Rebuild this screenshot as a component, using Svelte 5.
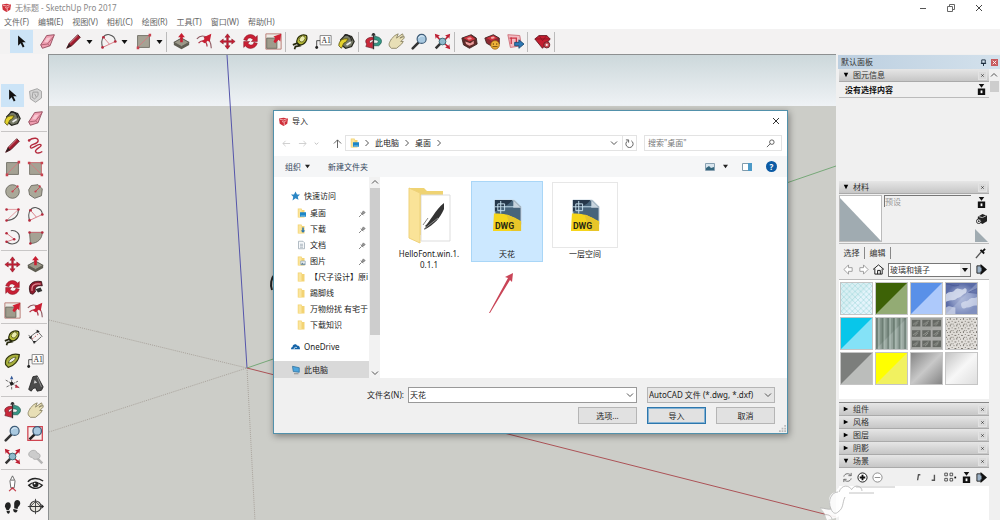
<!--
SketchUp main window with the import dialog open over the model canvas.

@component
-->
<script lang="ts">
	type Crumb = { label: string };

	const menus = ['文件(F)', '编辑(E)', '视图(V)', '相机(C)', '绘图(R)', '工具(T)', '窗口(W)', '帮助(H)'];

	/* Bodies of the tool icons, all drawn on a 20 x 20 grid */
	const icons: Record<string, string> = {
		select: '<path d="M6 3v12l3-3 2.5 5 2-1-2.5-5h4z" fill="#111"/>',
		component: '<path d="M3 5l9-3 5 3v8l-7 5-6-4z" fill="#d5d5d5" stroke="#999"/><path d="M7 6h6v4l-4 4-3-2zM9 8l2 4" fill="none" stroke="#999"/>',
		paint: '<path d="M3 8l6-6 7 2 3 6-3 6-7 2-5-4z" fill="#777b68" stroke="#26271f" stroke-width="1.4"/><path d="M1 15c0-6 4-9 11-8l-3 4c-3 0-3 4-5 7z" fill="#e4d22e" stroke="#55500f"/><path d="M7 3c4-2 9 1 9 6" fill="none" stroke="#222" stroke-width="1.5"/><path d="M10 14l5-3" stroke="#eee" stroke-width="2"/>',
		eraser: '<path d="M2 14l7-11 9-1-5 13-9 3z" fill="#ef9db0" stroke="#8c4456"/><path d="M2 14l8-1 8-10M10 13l3 2" fill="none" stroke="#a95a6c"/><path d="M9 6l5-1-4 6-4 0z" fill="#f8c7d1"/>',
		pencil: '<path d="M2 18l3-6L15 2l3 3L8 15z" fill="#a21d2f" stroke="#4d1119"/><path d="M6 12L15 3" stroke="#e28b94"/><path d="M2 18l3-5 2 2z" fill="#222"/>',
		freehand: '<path d="M2 4c6-4 12-3 11 1S3 8 4 12s9-5 12-3-7 5-6 8 5 2 8 0" fill="none" stroke="#b52a3d" stroke-width="1.6"/><circle cx="2.500" cy="4" r="1.500" fill="#b52a3d"/>',
		rectangle: '<path d="M3 3h14v14H3z" fill="#a5a294" stroke="#6c6a60"/><path d="M3 17L17 3" stroke="#d67a80"/><path d="M2 16h3v3H2zM16 1h3v3h-3z" fill="#c84350"/>',
		rotrect: '<path d="M3 3h14v14H3z" fill="#a5a294" stroke="#77746a"/><path d="M3 3h14v14M3 3l14 14" fill="none" stroke="#d67a80"/><path d="M1 2h3v3H1zM16 2h3v3h-3zM16 16h3v3h-3z" fill="#c84350"/>',
		circle: '<circle cx="10" cy="10" r="8" fill="#aaa899" stroke="#65635b"/><path d="M10 10l5-5" stroke="#c84350"/><circle cx="10" cy="10" r="1.3" fill="#c84350"/><circle cx="16" cy="4" r="1.3" fill="#c84350"/>',
		polygon: '<path d="M5 3l8-1 5 5-1 8-8 3-6-4-1-6z" fill="#aaa899" stroke="#65635b"/><path d="M10 10l5-5" stroke="#c84350"/><circle cx="10" cy="10" r="1.3" fill="#c84350"/><circle cx="15" cy="4" r="1.3" fill="#c84350"/>',
		arc: '<path d="M3 17C14 16 17 11 17 4" fill="none" stroke="#555" stroke-width="1.200"/><path d="M3 4h14M3 17l14-13" stroke="#df8d93"/><circle cx="3" cy="4" r="1.5" fill="#b52a3d"/><circle cx="17" cy="4" r="1.5" fill="#b52a3d"/><circle cx="3" cy="17" r="1.5" fill="#b52a3d"/>',
		arc2: '<path d="M3 17C0 7 5 1 11 2c4 1 7 4 7 8" fill="none" stroke="#555" stroke-width="1.2"/><path d="M3 17L18 10M4 5l7 8" stroke="#d56d77"/><circle cx="3" cy="17" r="1.6" fill="#b52a3d"/><circle cx="18" cy="10" r="1.6" fill="#b52a3d"/><circle cx="4" cy="5" r="1.6" fill="#b52a3d"/>',
		arc3: '<path d="M8 2c6-1 11 3 10 9-1 6-9 9-15 4" fill="none" stroke="#555" stroke-width="1.2"/><path d="M3 5l9 7M3 15l9-3" fill="none" stroke="#d56d77"/><circle cx="3" cy="5" r="1.5" fill="#b52a3d"/><circle cx="12" cy="12" r="1.5" fill="#b52a3d"/><circle cx="3" cy="15" r="1.5" fill="#b52a3d"/>',
		pie: '<path d="M3 4h15c0 7-5 13-14 13z" fill="#a5a294" stroke="#65635b"/><path d="M3 4h15" stroke="#d56d77"/><circle cx="3" cy="4" r="1.5" fill="#b52a3d"/><circle cx="18" cy="4" r="1.5" fill="#b52a3d"/><circle cx="4" cy="17" r="1.5" fill="#b52a3d"/>',
		pushpull: '<path d="M1 11l9-5 9 5-9 5z" fill="#9b9888" stroke="#4c4a42"/><path d="M1 11v3l9 5 9-5v-3l-9 5z" fill="#5f5d52"/><path d="M10 0l4 5h-2.500v6h-3V5H6z" fill="#c81f32"/>',
		followme: '<path d="M4 17C0 7 6 1 17 3l1 5C10 7 9 11 10 15l-3 3z" fill="#8d1b2c" stroke="#35141a"/><path d="M6 14c-1-7 3-9 10-8" fill="none" stroke="#e58a93" stroke-width="1.500"/><path d="M10 12l6-2 2 4-5 2z" fill="#333"/>',
		offset: '<path d="M1 7C6 1 17 2 18 18" fill="none" stroke="#8f5961" stroke-width="1.300"/><path d="M3 12c4-5 10-3 10 4" fill="none" stroke="#b0394a" stroke-width="1.500"/><path d="M7 10l3-3-1-2 9-4-2 10-2-2-4 3z" fill="#c81f32"/>',
		move: '<path d="M10 1l3 4h-2v4h4V7l4 3-4 3v-2h-4v4h2l-3 4-3-4h2v-4H5v2l-4-3 4-3v2h4V5H7z" fill="#c31d33" stroke="#8a1c2a" stroke-width=".6"/>',
		rotate: '<path d="M2 8c2-7 11-8 14-3l2-2v7h-7l2-2C10 4 6 6 6 9zM18 12c-2 7-11 8-14 3l-2 2v-7h7l-2 2c3 4 7 2 7-1z" fill="#c91f34" stroke="#871726" stroke-width=".6"/>',
		scale: '<path d="M1 1h18v18H1z" fill="#eceae4" stroke="#b5726b"/><path d="M2 6h12v12H2z" fill="#9f9c8c" stroke="#67655a"/><path d="M10 10l2-4-2-2 9-3-1 9-2-2-4 4z" fill="#cf2033"/>',
		tape: '<path d="M6 12C4 6 11 0 17 3c2 5-2 11-8 11z" fill="#b8bc35" stroke="#2d300d" stroke-width="1.500"/><ellipse cx="12" cy="7" rx="3" ry="4" transform="rotate(40 12 7)" fill="#e9ebab" stroke="#62651c"/><path d="M1 14l5-2 3 3-5 1-1 3" fill="none" stroke="#25270d" stroke-width="2"/>',
		dimension: '<path d="M4 9L12 3M8 17L17 9M2 7l7 10M11 1l7 8" stroke="#555" fill="none"/><path d="M2 10l4-2-1 4zM12 1l3 2-4 2zM7 14l4 0-3 3z" fill="#222"/><path d="M6 12l7-6" stroke="#a33" stroke-dasharray="2"/>',
		protractor: '<path d="M2 15C0 6 9 1 18 3c0 7-7 14-13 15z" fill="#a9b13d" stroke="#34380f" stroke-width="1.400"/><path d="M5 13c1-4 5-7 9-7-1 4-5 7-9 7z" fill="#eee" stroke="#555a1c"/>',
		axes: '<path d="M9 2v16M2 6l16 9M3 14l14-7" stroke="#555" stroke-dasharray="3 1"/><path d="M9 1l2 4H7z" fill="#345a9b"/><path d="M18 15l-4-4-1 4z" fill="#b52a3d"/><circle cx="9" cy="10" r="2" fill="#222"/>',
		text3d: '<path d="M2 17L7 2l5-1 7 13-2 4-5 1-2-4-3 1-2 3z" fill="#4b4b4b" stroke="#222"/><path d="M8 10l1-4 3 3z" fill="#ccc"/><path d="M12 2l5 12" stroke="#999"/>',
		orbit: '<path d="M10 1v18M8 3l2-3 2 3" stroke="#333" fill="none" stroke-width="1.500"/><path d="M9 5C2 5-1 9 2 13l-1 3 8 2V10L6 12C4 9 7 8 10 8z" fill="#c9283a" stroke="#5e1420" stroke-width=".7"/><path d="M11 4c9 0 11 7 5 11h-5v-3h3c3-1 2-4-3-4z" fill="#359987" stroke="#154d43" stroke-width=".7"/>',
		hand: '<path d="M4 18c-5-4-2-7 0-11L8 3l4-2-2 5 7-5 1 2-4 3 5-2v2l-4 4 3 0-2 3-6 5z" fill="#e8dfb6" stroke="#86805f"/>',
		zoom: '<path d="M2 18l7-7" stroke="#333" stroke-width="3" stroke-linecap="round"/><circle cx="12.500" cy="7" r="5.300" fill="#a9c9e0" stroke="#405e79" stroke-width="1.400"/><path d="M9 6c1-3 4-3 6-2" stroke="#eef8ff" fill="none"/>',
		zoomwindow: '<path d="M1 2h17v16H1z" fill="#f7f0ee" stroke="#d04450" stroke-width="1.500"/><path d="M3 17l6-6" stroke="#222" stroke-width="3"/><circle cx="12" cy="7" r="5" fill="#a9c9e0" stroke="#405e79" stroke-width="1.500"/>',
		extents: '<path d="M1 1l6 2-2 1 3 4-1 1-4-4-1 2zM19 1l-6 2 2 1-3 4 1 1 4-4 1 2zM19 19l-6-2 2-1-3-3 1-1 4 3 1-2z" fill="#bd2034"/><path d="M2 18l6-6" stroke="#333" stroke-width="3"/><circle cx="10" cy="10" r="4" fill="#8fb9cc" stroke="#326069"/>',
		previous: '<path d="M18 18l-7-7" stroke="#b5b5b5" stroke-width="3"/><path d="M2 7c1-5 9-6 10-1 4 0 5 6 0 7-3 1-5 0-6-2-3 0-4-2-4-4z" fill="#ccc" stroke="#aaa"/>',
		camera: '<path d="M8 15L7 7l3-6 3 6-1 8z" fill="#fff" stroke="#555"/><path d="M8 6h4" stroke="#555"/><path d="M6 19l4-4 4 4M8 16h4" stroke="#c33b48" fill="none" stroke-width="1.400"/>',
		look: '<path d="M1 8c4-5 12-5 18-1M2 12c4-4 11-4 16 0-4 5-11 5-16 0z" fill="#eee" stroke="#222" stroke-width="1.600"/><circle cx="10" cy="11" r="3.500" fill="#222"/><circle cx="9" cy="10" r="1" fill="#fff"/>',
		walk: '<path d="M1 10c0-6 7-7 7-1 0 3-2 3-2 5H3zM3 15h4c0 5-4 4-4 0zM12 6c1-6 8-4 7 1-1 3-3 3-3 6l-4-1zM11 13l5 1c-1 5-6 3-5-1z" fill="#222"/>',
		section: '<circle cx="10" cy="10" r="6.500" fill="#e6e3dc" stroke="#333" stroke-width="1.300"/><path d="M10 1v18M1 10h18M10 4l-6 6h12z" stroke="#333" fill="none"/><path d="M17 7l3 3-3 3z" fill="#222"/>',
		warehouse: '<path d="M1 6l11-4 6 4 1 7-9 5-7-4z" fill="#5f2b29" stroke="#3c2421"/><path d="M3 6l8-3 6 4-7 3z" fill="#cf343f"/><path d="M7 6l4-1 2 2-4 1zM5 10l6 2 4-3v4l-5 2-4-2z" fill="#eda19f"/>',
		extension: '<path d="M1 6l10-4 7 4v7l-8 3-7-4z" fill="#8b2a33" stroke="#3c2421"/><path d="M3 6l8-3 5 3-7 3z" fill="#cf343f"/><path d="M8 5l3-1 2 2-4 1z" fill="#f0b0ab"/><circle cx="13" cy="14" r="5" fill="#efb33a" stroke="#a06916"/><path d="M11 12v2M15 12v2M10 16h6" stroke="#69430c"/>',
		layout: '<path d="M1 2l14 1 2 12-13 2z" fill="#f3bcc2" stroke="#cb6873"/><path d="M3 6h8v5M5 5v8" fill="none" stroke="#cb3444" stroke-width="1.500"/><path d="M9 11h5V8l6 5-6 5v-3H9z" fill="#2d78b5" stroke="#17496f"/>',
		gem: '<path d="M1 7l5-4h9l4 4-9 11z" fill="#c41e30" stroke="#5c1720"/><path d="M1 7h18M6 3l4 6 5-6" stroke="#8d1422" fill="none"/><circle cx="15" cy="14" r="3.600" fill="#c94b54" stroke="#601d23"/><circle cx="15" cy="14" r="1.300" fill="#eee"/>',
		label: '<path d="M6 3h13v11H6z" fill="#fff" stroke="#777"/><path d="M6 9H2v8" fill="none" stroke="#333"/><circle cx="2" cy="17" r="1.700" fill="#222"/><text x="7.500" y="11.500" font-family="Liberation Serif, serif" font-size="9" fill="#222">A1</text>'
	};

	const mainTools = [
		['pushpull', 'offset', 'move', 'rotate', 'scale'],
		['tape', 'label', 'paint'],
		['orbit', 'hand', 'zoom', 'extents'],
		['warehouse', 'extension', 'layout'],
		['gem'],
		[]
	];

	const sideTools = [
		['select', 'component', 'paint', 'eraser'],
		['pencil', 'freehand', 'rectangle', 'rotrect', 'circle', 'polygon', 'arc', 'arc2', 'arc3', 'pie'],
		['move', 'pushpull', 'rotate', 'followme', 'scale', 'offset'],
		['tape', 'dimension', 'protractor', 'label', 'axes', 'text3d'],
		['orbit', 'hand', 'zoom', 'zoomwindow', 'extents', 'previous'],
		['camera', 'look', 'walk', 'section']
	];

	const crumbs: Crumb[] = [{ label: '此电脑' }, { label: '桌面' }];

	const places = [
		{ label: '桌面', kind: 'desktop', pinned: true },
		{ label: '下载', kind: 'download', pinned: true },
		{ label: '文档', kind: 'doc', pinned: true },
		{ label: '图片', kind: 'picture', pinned: true },
		{ label: '【尺子设计】原i', kind: 'folder' },
		{ label: '踢脚线', kind: 'folder' },
		{ label: '万物纷扰 有宅于', kind: 'folder' },
		{ label: '下载知识', kind: 'folder' }
	];

	const files = [
		{ name: 'HelloFont.win.1.0.1.1', kind: 'folder' },
		{ name: '天花', kind: 'dwg' },
		{ name: '一层空间', kind: 'dwg', framed: true }
	];

	const swatches = [
		{ base: '#d9eff3', light: '#e4f4fb', texture: 'lattice' },
		{ base: '#3d6206', light: '#93ab74' },
		{ base: '#5990e8', light: '#adc9fb' },
		{ base: 'url(#clouds)', light: '#b9c5e4', texture: 'clouds' },
		{ base: '#08c6ea', light: '#84e2f7' },
		{ base: '#83938a', light: '#98a69f', texture: 'stripes' },
		{ base: '#a1a39f', light: '#a9aaa7', texture: 'blocks' },
		{ base: '#dedbd6', light: '#e2dfdb', texture: 'speckle' },
		{ base: '#7c7e7c', light: '#bbbdbb' },
		{ base: '#ffff00', light: '#f1f160' },
		{ base: 'url(#chrome)', light: 'none' },
		{ base: 'url(#silver)', light: 'none' }
	];

	const closedTrays = ['组件', '风格', '图层', '阴影'];

	let selected = $state('天花');
	let fileName = $state('天花');

	function pick(name: string) {
		selected = name;
		fileName = name;
	}
</script>

{#snippet tool(name: string, active = false)}
	<button class="tool" class:active aria-label={name}>
		<svg viewBox="0 0 20 20" aria-hidden="true">{@html icons[name]}</svg>
	</button>
{/snippet}

{#snippet logo()}
	<svg class="logo" viewBox="0 0 12 12" aria-hidden="true">
		<path d="M0 2l6-1 6 1-1 7-5 3-5-3z" fill="#cf2f3a" />
		<path d="M1 3l5 1 5-2M4 6l3 1v4M7 6l3-1" fill="none" stroke="#fbd5d5" />
	</svg>
{/snippet}

{#snippet chevron(dir: string)}
	<svg class="chevron {dir}" viewBox="0 0 8 8" aria-hidden="true"><path d="M1 2.500l3 3 3-3" fill="none" stroke="currentColor" /></svg>
{/snippet}

{#snippet trayHead(title: string, open = false)}
	<header class="tray-head">
		<svg class="mark" viewBox="0 0 8 8" aria-hidden="true"><path d={open ? 'M1 1h6L4 7z' : 'M1 1l6 3-6 3z'} /></svg>
		<span>{title}</span>
		<button class="tray-close" aria-label="关闭{title}">
			<svg viewBox="0 0 9 9" aria-hidden="true"><path d="M3 3l3 3M6 3L3 6" stroke="#333" /></svg>
		</button>
	</header>
{/snippet}

{#snippet placeIcon(kind: string)}
	<svg class="place-icon" viewBox="0 0 12 12" aria-hidden="true">
		{#if kind === 'doc'}
			<path d="M2 1h6l2 2v8H2z" fill="#f6f8fa" stroke="#9aa7b1" />
			<path d="M4 5h4M4 7h4M4 9h4" stroke="#9aa7b1" />
		{:else}
			<path d="M1 0h5l1 2h3v10H1z" fill="#f3d374" />
			<path d="M2 1h4v11H2z" fill="#fae59d" />
			{#if kind === 'desktop'}
				<path d="M4 5h8v6H4z" fill="#1c86c7" />
				<path d="M5 10h6" stroke="#9bd6f5" />
			{:else if kind === 'download'}
				<path d="M7 4h2v4h2l-3 3-3-3h2z" fill="#2674b4" />
			{:else if kind === 'picture'}
				<path d="M5 6h6v5H5z" fill="#e9eef3" stroke="#93a9b8" />
				<path d="M5 11l2-3 2 2 1-1 1 2z" fill="#678597" />
			{/if}
		{/if}
	</svg>
{/snippet}

{#snippet dropBox()}
	<svg class="small-icon" viewBox="0 0 12 12" aria-hidden="true">
		<path d="M2 5h8v7H2zM3 0h6L6 4z" fill="#111" />
		<path d="M5 7h2v3H5z" fill="#fff" />
	</svg>
{/snippet}

{#snippet details()}
	<svg class="small-icon" viewBox="0 0 12 12" aria-hidden="true">
		<path d="M1 2h5v8H1z" fill="#9db2c6" stroke="#222" />
		<path d="M5 0l7 6-7 6z" fill="#111" />
		<path d="M4 4h2v4H4z" fill="#9db2c6" />
	</svg>
{/snippet}

<div class="app">
	<header class="title-bar">
		{@render logo()}
		<span class="title">无标题 - SketchUp Pro 2017</span>
		<div class="window-buttons">
			<button aria-label="最小化"><svg viewBox="0 0 8 8"><path d="M1 4.500h6" stroke="#555" /></svg></button>
			<button aria-label="还原"><svg viewBox="0 0 8 8"><path d="M.5 2.500h5v5h-5zM2.500 2V.5h5v5H6" fill="none" stroke="#666" /></svg></button>
			<button aria-label="关闭"><svg viewBox="0 0 8 8"><path d="M1 1l6 6M7 1L1 7" stroke="#444" /></svg></button>
		</div>
	</header>

	<nav class="menu-bar">
		{#each menus as menu}
			<button>{menu}</button>
		{/each}
	</nav>

	<div class="main-tools">
		<div class="lead-tools">
			{@render tool('select', true)}
			{@render tool('eraser')}
			{#each ['pencil', 'arc2', 'rectangle'] as name}
				<div class="split">
					{@render tool(name)}
					<button class="drop" aria-label="更多"><svg viewBox="0 0 8 8"><path d="M1 2h6L4 6z" fill="#111" /></svg></button>
				</div>
			{/each}
		</div>
		{#each mainTools as group}
			<i class="divider"></i>
			{#each group as name}
				{@render tool(name)}
			{/each}
		{/each}
	</div>

	<div class="workspace">
		<aside class="side-tools">
			{#each sideTools as group, g}
				<div class="tool-group">
					{#each group as name, i}
						{@render tool(name, g === 0 && i === 0)}
					{/each}
				</div>
			{/each}
		</aside>

		<main class="viewport">
			<svg class="model" viewBox="0 0 787 466" preserveAspectRatio="xMinYMin slice" aria-hidden="true">
				<defs>
					<linearGradient id="sky" x2="0" y2="1">
						<stop offset="0" stop-color="#ccd8db" />
						<stop offset="1" stop-color="#eff2f5" />
					</linearGradient>
				</defs>
				<rect width="787" height="466" fill="#cccdc8" />
				<rect width="787" height="51" fill="url(#sky)" />
				<g fill="none">
					<path d="M0 265l198 48M0 377l198-64M198 313l8 153" stroke="#aaa49d" stroke-dasharray="1 1" />
					<path d="M178 0l20 313" stroke="#5555ab" />
					<path d="M198 313L787 111" stroke="#76a878" />
					<path d="M198 313l589 149" stroke="#ac5357" />
					<path d="M226 219c-4 4-5 11-3 16" stroke="#222" stroke-width="2" />
				</g>
			</svg>

			<section class="dialog" role="dialog" aria-label="导入">
				<header class="dialog-title">
					{@render logo()}
					<span>导入</span>
					<button class="dialog-close" aria-label="关闭"><svg viewBox="0 0 8 8"><path d="M1 1l6 6M7 1L1 7" stroke="#333" /></svg></button>
				</header>

				<div class="address-row">
					<div class="history">
						<button disabled aria-label="后退"><svg viewBox="0 0 10 10"><path d="M9 5H1M4 2L1 5l3 3" fill="none" stroke="#ccc" /></svg></button>
						<button disabled aria-label="前进"><svg viewBox="0 0 10 10"><path d="M1 5h8M6 2l3 3-3 3" fill="none" stroke="#ccc" /></svg></button>
						<button class="recent" aria-label="最近"><svg viewBox="0 0 10 10"><path d="M3 4l2 2 2-2" fill="none" stroke="#bbb" /></svg></button>
						<button class="up-level" aria-label="向上"><svg viewBox="0 0 10 10"><path d="M5 10V1M1 5l4-4 4 4" fill="none" stroke="#555" /></svg></button>
					</div>
					<div class="address">
						{@render placeIcon('desktop')}
						{@render chevron('right')}
						{#each crumbs as crumb}
							<a href="#top">{crumb.label}</a>
							{@render chevron('right')}
						{/each}
						<span class="address-end">{@render chevron('down')}</span>
						<button class="refresh" aria-label="刷新">
							<svg viewBox="0 0 10 10"><path d="M7 2a4 4 0 1 1-4 0M1 1h3v3" fill="none" stroke="#555" /></svg>
						</button>
					</div>
					<div class="search">
						<input aria-label="搜索" placeholder="搜索&quot;桌面&quot;" />
						<svg viewBox="0 0 10 10" aria-hidden="true"><path d="M1 9l4-4" stroke="#555" /><circle cx="6.500" cy="3.500" r="2.500" fill="none" stroke="#555" /></svg>
					</div>
				</div>

				<div class="commands">
					<button>组织 <svg class="caret" viewBox="0 0 6 6"><path d="M0 1h6L3 5z" fill="#222" /></svg></button>
					<button>新建文件夹</button>
					<div class="command-icons">
						<button aria-label="视图">
							<svg class="view-icon" viewBox="0 0 10 8"><path d="M.5.5h9v7h-9z" fill="#d8e5ee" stroke="#8aa2b2" /><path d="M1 5l3-2 2 2 3-1v3H1z" fill="#34667d" /></svg>
						</button>
						<button aria-label="更多视图"><svg class="caret" viewBox="0 0 6 6"><path d="M0 1h6L3 5z" fill="#222" /></svg></button>
						<button aria-label="预览窗格">
							<svg class="view-icon" viewBox="0 0 10 8"><path d="M.5.5h9v7h-9z" fill="#fff" stroke="#809cad" /><path d="M6 0h4v8H6z" fill="#4c9ac8" /></svg>
						</button>
						<button class="help" aria-label="帮助">?</button>
					</div>
				</div>

				<div class="browser">
					<nav class="places">
						<a class="root" href="#quick">
							<svg class="place-icon" viewBox="0 0 12 12"><path d="M6 0l2 4 4 0-3 3 1 4-4-2-4 3 1-5-3-3h4z" fill="#2b86c5" /></svg>
							快速访问
						</a>
						{#each places as place}
							<a class="child" href="#place">
								{@render placeIcon(place.kind)}
								<span>{place.label}</span>
								{#if place.pinned}
									<svg class="pin" viewBox="0 0 8 8"><path d="M0 8l3-3M2 3l3 3M3 4l2-3 2 2-3 2" fill="#999" stroke="#777" /></svg>
								{/if}
							</a>
						{/each}
						<a class="root spaced" href="#onedrive">
							<svg class="place-icon" viewBox="0 0 12 12"><path d="M0 9c0-2 1-3 2-3 0-4 5-5 6-2 3 0 4 2 4 5z" fill="#1464a8" /><path d="M4 9c0-3 3-3 4-2" fill="none" stroke="#fff" /></svg>
							OneDrive
						</a>
						<a class="root spaced current" href="#pc">
							<svg class="place-icon" viewBox="0 0 12 12"><path d="M2 1l9 2v6l-8-1z" fill="#4da5dd" stroke="#2c6f9c" /><path d="M4 11h6" stroke="#777" /></svg>
							此电脑
						</a>
					</nav>
					<div class="scrollbar">
						{@render chevron('up')}
						<i class="thumb"></i>
						{@render chevron('down')}
					</div>

					<div class="files">
						{#each files as file}
							<button class="file" class:selected={selected === file.name} class:framed={file.framed} onclick={() => pick(file.name)}>
								<span class="thumbnail">
									{#if file.kind === 'folder'}
										<svg class="folder-art" viewBox="0 0 44 58">
											<path d="M2 2h15l3 3h16v44H2z" fill="#efd373" />
											<path d="M14 9h29v46H14z" fill="#fff" stroke="#ddd" />
											<path d="M18 40c5-4 10-16 19-23v6c-4 9-9 15-20 21 3-4 2-3 1-4z" fill="#333" />
											<path d="M16 39l5-7M17 43l14-11" stroke="#888" />
											<path d="M2 2l11 5v50L2 52z" fill="#fae398" stroke="#efd27a" />
										</svg>
									{:else}
										<svg class="dwg-art" viewBox="0 0 32 34">
											<path d="M3 1h20l7 7v18H3z" fill="#47647b" stroke="#cbd9e3" />
											<path d="M3 1h18c-3 5-10 7-18 12z" fill="#26384b" />
											<path d="M22 1v8h8" fill="#c8d5df" />
											<path d="M2 15c10-1 18 2 28 8v10H1z" fill="#f6d51b" />
											<path d="M15 16c7 2 13 7 15 8v9H20z" fill="#e7c52a" />
											<path d="M6 5h7v7H6zM9 2v13M3 8h20" fill="none" stroke="#c5dfed" />
											<text x="3" y="31" font-family="Roboto, sans-serif" font-size="9" font-weight="700" fill="#292814">DWG</text>
										</svg>
									{/if}
								</span>
								<span class="file-name">{file.name}</span>
							</button>
						{/each}
						<svg class="pointer" viewBox="0 0 28 44" aria-hidden="true">
							<path d="M2 42L21 7l-3-1 8-4-1 9-2-2L3 42z" fill="#c94557" />
						</svg>
					</div>
				</div>

				<footer class="dialog-footer">
					<div class="name-row">
						<label for="file-name">文件名(N):</label>
						<div class="combo">
							<input id="file-name" bind:value={fileName} />
							{@render chevron('down')}
						</div>
						<div class="type">
							<select aria-label="文件类型">
								<option>AutoCAD 文件 (*.dwg, *.dxf)</option>
							</select>
							{@render chevron('down')}
						</div>
					</div>
					<div class="actions">
						<button>选项...</button>
						<button class="primary">导入</button>
						<button>取消</button>
					</div>
					<svg class="grip" viewBox="0 0 8 8" aria-hidden="true"><path d="M6 0h2v2H6zM3 3h2v2H3zM6 3h2v2H6zM0 6h2v2H0zM3 6h2v2H3zM6 6h2v2H6z" fill="#bbb" /></svg>
				</footer>
			</section>
		</main>

		<aside class="panel">
			<header class="panel-title">
				<span>默认面板</span>
				<svg viewBox="0 0 8 8" aria-hidden="true"><path d="M2 1h4v4H2zM1 5h6M4 5v3" stroke="#123" fill="none" /></svg>
				<button aria-label="关闭面板"><svg viewBox="0 0 8 8"><path d="M2 2l4 4M6 2L2 6" stroke="#fff" /></svg></button>
			</header>
			<div class="panel-body">
				<div class="trays">
					<section class="entity">
						{@render trayHead('图元信息', true)}
						<div class="entity-row">
							<strong>没有选择内容</strong>
							{@render dropBox()}
						</div>
					</section>

					<section>
						{@render trayHead('材料', true)}
						<div class="material-top">
							<svg class="preview" viewBox="0 0 42 46" preserveAspectRatio="none" aria-hidden="true"><path d="M0 2v44h42z" fill="#a0abb1" /></svg>
							<input class="material-name" aria-label="材料名称" value="预设" />
							<div class="material-icons">
								{@render dropBox()}
								<svg class="small-icon" viewBox="0 0 12 12" aria-hidden="true">
									<path d="M2 4l5-3 5 2v6l-5 3-5-3z" fill="#222" />
									<path d="M3 4l4 1 4-2" stroke="#ccc" fill="none" />
									<circle cx="3" cy="9" r="2.500" fill="#fff" stroke="#222" />
									<path d="M2 9h2M3 8v2" stroke="#222" />
								</svg>
								<svg class="small-preview" viewBox="0 0 14 14" aria-hidden="true"><path d="M0 0v14h14z" fill="#a0abb1" /></svg>
							</div>
						</div>
						<div class="tabs">
							<button>选择</button>
							<button>编辑</button>
							<svg class="small-icon" viewBox="0 0 12 12" aria-hidden="true"><path d="M1 11l6-7" stroke="#555" stroke-width="1.500" /><path d="M6 2l4 4M8 4l3-3" stroke="#111" stroke-width="2" /></svg>
						</div>
						<div class="library">
							<svg class="small-icon" viewBox="0 0 12 12" aria-hidden="true"><path d="M1 6l5-5v3h4v4H6v3z" fill="#fff" stroke="#999" /></svg>
							<svg class="small-icon" viewBox="0 0 12 12" aria-hidden="true"><path d="M11 6L6 1v3H2v4h4v3z" fill="#fff" stroke="#999" /></svg>
							<svg class="small-icon" viewBox="0 0 12 12" aria-hidden="true"><path d="M0 6l6-5 6 5M2 5v6h8V5M5 11V7h3v4" fill="#fff" stroke="#111" /></svg>
							<div class="library-name">
								<select aria-label="材料库"><option>玻璃和镜子</option></select>
								<svg viewBox="0 0 10 12" aria-hidden="true"><path d="M0 0h10v12H0z" fill="#eee" /><path d="M2 4h6L5 8z" fill="#111" /></svg>
							</div>
							{@render details()}
						</div>
						<div class="swatches">
							<svg class="defs" aria-hidden="true">
								<defs>
									<pattern id="lattice" width="6" height="6" patternUnits="userSpaceOnUse"><path d="M0 0l6 6M6 0L0 6" stroke="#a5dade" stroke-width=".7" /></pattern>
									<pattern id="stripes" width="6" height="33" patternUnits="userSpaceOnUse"><path d="M1 0v33" stroke="#54665c" /><path d="M3 0v33" stroke="#b9c8c0" /></pattern>
									<pattern id="blocks" width="11" height="11" patternUnits="userSpaceOnUse"><path d="M1 2h9v7H1z" fill="#656863" /><path d="M2 7l6-4M4 8l3-3" stroke="#989b95" /></pattern>
									<pattern id="speckle" width="7" height="7" patternUnits="userSpaceOnUse"><path d="M1 1h1v1H1zM4 0h1v2H4zM2 4h2v1H2zM6 3h1v1H6zM5 6h1v1H5zM0 6h1v1H0z" fill="#77736c" /></pattern>
									<radialGradient id="clouds" cx=".5" cy=".5"><stop offset="0" stop-color="#a9b4d6" /><stop offset=".6" stop-color="#8593c1" /><stop offset="1" stop-color="#5a6ba6" /></radialGradient>
									<linearGradient id="chrome" x2="1" y2="1"><stop offset="0" stop-color="#858585" /><stop offset=".5" stop-color="#c8c8c8" /><stop offset="1" stop-color="#858585" /></linearGradient>
									<linearGradient id="silver" x2="1" y2="1"><stop offset="0" stop-color="#c4c4c4" /><stop offset=".5" stop-color="#f7f7f7" /><stop offset="1" stop-color="#dedede" /></linearGradient>
								</defs>
							</svg>
							{#each swatches as swatch}
								<button class="swatch" aria-label="材料">
									<svg viewBox="0 0 33 33">
										<rect width="33" height="33" fill={swatch.base} />
										<path d="M33 0v33H0z" fill={swatch.light} opacity={swatch.texture === 'clouds' ? 0.4 : 1} />
										{#if swatch.texture === 'clouds'}
											<path d="M0 12c3-4 7-1 9-4 4-5 7 1 10-2 3-2 4 2 2 5-4 1-5 5-9 5-3 4-6 1-12 4z" fill="#dfe5f2" opacity=".8" />
											<path d="M16 22c3-4 6-1 9-5 3-2 6 0 8-2v9c-5-1-7 3-11 2-4 3-6 0-6-4zM0 26c4-3 6 0 10 0v7H0z" fill="#e6ebf6" opacity=".6" />
											<path d="M0 1c6 0 8 4 14 1M24 10l9-4v5z" stroke="#414f8e" fill="#5566a1" opacity=".6" />
										{:else if swatch.texture}
											<rect width="33" height="33" fill="url(#{swatch.texture})" />
										{/if}
									</svg>
								</button>
							{/each}
						</div>
					</section>

					<div class="closed">
						{#each closedTrays as title}
							{@render trayHead(title)}
						{/each}
						{@render trayHead('场景', true)}
					</div>
					<div class="scene-tools">
						<svg class="small-icon" viewBox="0 0 12 12" aria-hidden="true"><path d="M2 5c1-4 6-4 8-1M10 7c-1 4-6 4-8 1M10 1v3H7M2 11V8h3" fill="none" stroke="#666" /></svg>
						<svg class="small-icon" viewBox="0 0 12 12" aria-hidden="true"><circle cx="6" cy="6" r="5" fill="#fff" stroke="#111" /><path d="M3 6h6M6 3v6" stroke="#111" stroke-width="2" /></svg>
						<svg class="small-icon" viewBox="0 0 12 12" aria-hidden="true"><circle cx="6" cy="6" r="5" fill="#fff" stroke="#888" /><path d="M3 6h6" stroke="#888" /></svg>
						<span class="spacer"></span>
						<svg class="small-icon" viewBox="0 0 12 12" aria-hidden="true"><path d="M8 3H6L5 9" fill="none" stroke="#555" stroke-width="1.500" /></svg>
						<svg class="small-icon" viewBox="0 0 12 12" aria-hidden="true"><path d="M7 3v6H4" fill="none" stroke="#555" stroke-width="1.500" /></svg>
						<svg class="small-icon wide" viewBox="0 0 16 12" aria-hidden="true"><path d="M2 1h3v3H2zM2 7h3v3H2zM8 1h3v3H8zM8 7h3v3H8z" fill="none" stroke="#444" /><path d="M13 5h2v2h-2z" fill="#111" /></svg>
						{@render dropBox()}
						{@render details()}
					</div>
					<div class="scene-list"></div>
				</div>
				<div class="panel-scroll">
					{@render chevron('up')}
					<i></i>
				</div>
			</div>
		</aside>
	</div>

	<svg class="sketch" viewBox="0 0 80 38" aria-hidden="true">
		<path d="M0 26c5 0 8 2 11 1-4-8-2-16 5-17 2-8 13-8 16-3 4-5 11-3 12 2v4c-12 0-17 1-19 4-3 6-1 14-7 18-4 2-10 3-11 3-2-4-1-7-7-12z" fill="#fff" opacity=".9" />
		<path d="M0 26c5 0 8 2 11 1m0 0c-4-9 1-17 7-17M19 10c3-8 10-7 13-2M32 7c3-5 10-3 10 2M36 5h39M29 11h25M25 15c-3 6-1 11-7 15M11 27c2 5 5 5 7 3M3 33c4-1 8 0 9 4" fill="none" stroke="#b3b3b3" stroke-width=".8" />
	</svg>
</div>

<style>
	:global(body) {
		margin: 0;
	}

	.app {
		position: relative;
		display: flex;
		flex-direction: column;
		height: 100vh;
		overflow: hidden;
		background: #fff;
		color: #333;
		font: 8px/12px 'Noto Sans', 'Noto Sans CJK SC', sans-serif;
	}

	.app * {
		box-sizing: border-box;
	}

	svg {
		display: block;
		flex-shrink: 0;
	}

	button,
	input,
	select {
		margin: 0;
		padding: 0;
		border: 0;
		background: none;
		color: inherit;
		font: inherit;
	}

	select {
		appearance: none;
		width: 100%;
	}

	a {
		color: inherit;
		text-decoration: none;
	}

	.logo {
		width: 9px;
		height: 9px;
	}

	.chevron {
		width: 8px;
		height: 8px;
		color: #555;
	}

	.chevron.right {
		transform: rotate(-90deg);
	}

	.chevron.up {
		transform: rotate(180deg);
	}

	/* Window chrome */
	.title-bar {
		display: flex;
		align-items: center;
		gap: 4px;
		height: 15px;
		padding-left: 2px;
	}

	.title {
		color: #888;
	}

	.window-buttons {
		display: flex;
		margin-left: auto;
		padding-right: 7px;
	}

	.window-buttons button {
		display: grid;
		place-items: center;
		width: 28px;
	}

	.window-buttons svg {
		width: 8px;
		height: 8px;
	}

	.menu-bar {
		display: flex;
		gap: 9px;
		height: 14px;
		padding-left: 4px;
		color: #666;
	}

	.main-tools {
		display: flex;
		align-items: center;
		height: 25px;
		padding-left: 10px;
		background: #f3f2f2;
	}

	.lead-tools {
		display: flex;
		gap: 3px;
		margin-right: 2px;
	}

	.split {
		display: flex;
		align-items: center;
	}

	.drop svg {
		width: 9px;
		height: 8px;
	}

	.divider {
		width: 1px;
		height: 20px;
		margin-right: 3px;
		background: #bbb;
	}

	.tool {
		display: grid;
		place-items: center;
		width: 23px;
		height: 23px;
	}

	.tool.active {
		background: #cce4f7;
	}

	.tool svg {
		width: 17px;
		height: 17px;
	}

	.workspace {
		display: flex;
		flex: 1;
		min-height: 0;
	}

	.side-tools {
		width: 49px;
		padding: 30px 1px 0;
		border-right: 1px solid #8d9091;
		background: #f6f4f4;
	}

	.tool-group {
		display: grid;
		grid-template-columns: 23px 23px;
	}

	.tool-group + .tool-group {
		margin-top: 1px;
		padding-top: 2px;
		border-top: 1px solid #c8c6c6;
	}

	.viewport {
		position: relative;
		flex: 1;
		min-width: 0;
		border-top: 1px solid #8d9091;
	}

	.model {
		width: 100%;
		height: 100%;
	}

	/* Import dialog */
	.dialog {
		position: absolute;
		top: 55px;
		left: 224px;
		width: 515px;
		border: 1px solid #5291ab;
		background: #fff;
		box-shadow: 1px 2px 7px rgb(0 0 0 / 40%);
		color: #222;
	}

	.dialog-title {
		display: flex;
		align-items: center;
		gap: 4px;
		height: 20px;
		padding: 0 7px 0 5px;
	}

	.dialog-close {
		margin-left: auto;
	}

	.dialog-close svg {
		width: 8px;
		height: 8px;
	}

	.address-row {
		display: flex;
		height: 25px;
		padding: 4px 5px 5px 0;
	}

	.history {
		display: flex;
		align-items: center;
		gap: 7px;
		width: 71px;
		padding: 0 3px 0 8px;
	}

	.history svg {
		width: 9px;
		height: 9px;
	}

	.history .recent {
		margin: 0 -3px 0 -2px;
	}

	.history .up-level {
		margin-left: auto;
	}

	.address,
	.search {
		display: flex;
		align-items: center;
		border: 1px solid #e3e3e3;
	}

	.address {
		flex: 1;
		gap: 4px;
		padding-left: 4px;
	}

	.address-end {
		margin-left: auto;
	}

	.refresh {
		display: grid;
		place-items: center;
		width: 14px;
		height: 14px;
		border-left: 1px solid #e3e3e3;
	}

	.refresh svg {
		width: 9px;
		height: 9px;
	}

	.search {
		width: 138px;
		margin-left: 7px;
		padding: 0 6px 0 3px;
	}

	.search input {
		flex: 1;
		min-width: 0;
	}

	.search input::placeholder {
		color: #777;
	}

	.search svg {
		width: 9px;
		height: 9px;
	}

	.commands {
		display: flex;
		align-items: center;
		gap: 18px;
		height: 21px;
		padding: 0 10px 0 11px;
		background: #f5f6f7;
		color: #34465c;
	}

	.commands button {
		display: flex;
		align-items: center;
		gap: 4px;
	}

	.caret {
		width: 5px;
		height: 5px;
	}

	.command-icons {
		display: flex;
		align-items: center;
		gap: 14px;
		margin-left: auto;
	}

	.command-icons button:first-child {
		margin-right: -6px;
	}

	.view-icon {
		width: 10px;
		height: 8px;
	}

	.commands .help {
		justify-content: center;
		width: 11px;
		height: 11px;
		border-radius: 50%;
		background: #0c5ba5;
		color: #fff;
		font-weight: 700;
	}

	.browser {
		display: flex;
		height: 201px;
	}

	.places {
		width: 95px;
		padding-top: 10px;
		overflow: hidden;
	}

	.places a {
		display: flex;
		align-items: center;
		gap: 4px;
		height: 16px;
		white-space: nowrap;
	}

	.places .root {
		height: 18px;
		padding-left: 17px;
	}

	.places .child {
		padding-left: 23px;
	}

	.places .spaced {
		margin-top: 5px;
	}

	.places .current {
		background: #d9d9d9;
	}

	.place-icon {
		width: 9px;
		height: 10px;
	}

	.pin {
		width: 7px;
		height: 7px;
		margin: 0 3px 0 auto;
	}

	.scrollbar {
		display: flex;
		flex-direction: column;
		align-items: center;
		width: 11px;
		padding: 1px 0;
		background: #f2f2f2;
	}

	.scrollbar .thumb {
		width: 10px;
		height: 147px;
		margin: 2px 0 auto;
		background: #cdcdcd;
	}

	.files {
		position: relative;
		display: flex;
		flex: 1;
		align-items: flex-start;
		gap: 6px;
		padding: 4px 0 0 13px;
	}

	.file {
		display: flex;
		flex-direction: column;
		align-items: center;
		width: 72px;
		border: 1px solid transparent;
	}

	.file.selected {
		border-color: #a9d6f7;
		background: #cce8ff;
	}

	.thumbnail {
		display: grid;
		place-items: center;
		width: 66px;
		height: 66px;
	}

	.framed .thumbnail {
		border: 1px solid #e7e7e7;
	}

	.folder-art {
		width: 44px;
		height: 58px;
	}

	.dwg-art {
		width: 31px;
		height: 33px;
	}

	.file-name {
		width: 100%;
		padding: 0 4px 2px;
		line-height: 11px;
		word-break: break-all;
	}

	.pointer {
		position: absolute;
		top: 94px;
		left: 107px;
		width: 28px;
		height: 44px;
	}

	.dialog-footer {
		position: relative;
		padding: 9px 12px 9px 0;
		background: #f0f0f0;
	}

	.name-row {
		display: flex;
		gap: 10px;
		height: 16px;
	}

	.name-row label {
		width: 130px;
		margin-right: -6px;
		line-height: 16px;
		text-align: right;
	}

	.combo,
	.type {
		display: flex;
		align-items: center;
		border: 1px solid #999;
	}

	.combo {
		flex: 1;
		padding-right: 2px;
		background: #fff;
	}

	.combo input {
		flex: 1;
		min-width: 0;
		padding-left: 1px;
	}

	.type {
		width: 128px;
		padding: 0 2px 0 1px;
		border-color: #b5b5b5;
		background: #e5e5e5;
	}

	.type select {
		flex: 1;
		min-width: 0;
	}

	.actions {
		display: flex;
		justify-content: flex-end;
		gap: 10px;
		margin-top: 4px;
	}

	.actions button {
		width: 59px;
		height: 17px;
		border: 1px solid #b5b5b5;
		background: #e1e1e1;
	}

	.actions .primary {
		border-color: #2d77ad;
		box-shadow: inset 0 0 0 1px #83b2d4;
	}

	.grip {
		position: absolute;
		right: 1px;
		bottom: 1px;
		width: 7px;
		height: 7px;
	}

	/* Default tray */
	.panel {
		display: flex;
		flex-direction: column;
		width: 164px;
		padding: 1px 0 0 2px;
		background: #f0f0f0;
	}

	.panel-title {
		display: flex;
		align-items: center;
		gap: 4px;
		height: 14px;
		padding: 0 2px 0 3px;
		background: linear-gradient(90deg, #bccfe0, #d3e1ec);
	}

	.panel-title span {
		margin-right: auto;
	}

	.panel-title svg {
		width: 7px;
		height: 7px;
	}

	.panel-title button {
		background: #c75a5e;
	}

	.panel-body {
		display: flex;
		flex: 1;
		min-height: 0;
	}

	.trays {
		display: flex;
		flex: 1;
		flex-direction: column;
		min-width: 0;
		padding-left: 1px;
	}

	.tray-head {
		display: flex;
		align-items: center;
		gap: 4px;
		height: 13px;
		padding: 0 2px 0 4px;
		border-bottom: 1px solid #aaa;
		background: linear-gradient(#e6e6e6, #c6c6c6);
	}

	.mark {
		width: 6px;
		height: 6px;
	}

	.tray-close {
		margin-left: auto;
	}

	.tray-close svg {
		width: 9px;
		height: 9px;
		border: 1px solid #e2e2e2;
		background: #dadada;
	}

	.small-icon {
		width: 11px;
		height: 11px;
	}

	.small-icon.wide {
		width: 14px;
	}

	.entity {
		height: 112px;
	}

	.entity-row {
		display: flex;
		align-items: center;
		justify-content: space-between;
		height: 16px;
		padding: 0 2px 0 6px;
		border-bottom: 1px solid #bbb;
		color: #111;
	}

	.material-top {
		display: flex;
		align-items: flex-start;
		gap: 2px;
		height: 50px;
		padding-top: 1px;
		border-bottom: 1px solid #bbb;
	}

	.preview {
		width: 43px;
		height: 47px;
		border: 1px solid #bbb;
		background: #fff;
	}

	.material-name {
		flex: 1;
		min-width: 0;
		height: 12px;
		border-top: 1px solid #777;
		border-left: 1px solid #777;
		color: #999;
	}

	.material-icons {
		display: flex;
		flex-direction: column;
		align-items: center;
		gap: 5px;
		width: 14px;
		margin: 2px 1px 0;
	}

	.small-preview {
		width: 13px;
		height: 13px;
	}

	.tabs {
		display: flex;
		align-items: center;
		height: 18px;
		padding-right: 3px;
	}

	.tabs button {
		width: 26px;
		border-right: 1px solid #888;
	}

	.tabs .small-icon {
		margin-left: auto;
	}

	.library {
		display: flex;
		align-items: center;
		gap: 4px;
		height: 18px;
		padding: 0 2px 2px 4px;
		border-bottom: 1px solid #bbb;
	}

	.library-name {
		display: flex;
		flex: 1;
		min-width: 0;
		margin-right: 1px;
		border: 1px solid #777;
		background: #fff;
	}

	.library-name select {
		flex: 1;
		min-width: 0;
		padding-left: 1px;
	}

	.library-name svg {
		width: 10px;
		height: 12px;
	}

	.swatches {
		display: grid;
		grid-template-columns: repeat(4, 33px);
		gap: 2px;
		align-content: start;
		height: 119px;
		padding: 2px 1px;
		background: #fff;
	}

	.defs {
		position: absolute;
		width: 0;
		height: 0;
	}

	.swatch svg {
		width: 33px;
		height: 33px;
		border: 1px solid #c5c5c5;
	}

	.closed {
		margin-top: 3px;
		border-top: 1px solid #888;
	}

	.scene-tools {
		display: flex;
		align-items: center;
		gap: 4px;
		height: 18px;
		padding: 0 2px 0 3px;
	}

	.spacer {
		flex: 1;
	}

	.scene-list {
		flex: 1;
		background: #fff;
	}

	.panel-scroll {
		width: 11px;
		padding: 2px 1px;
	}

	.panel-scroll i {
		display: block;
		height: 11px;
		margin-top: 2px;
		background: #cdcdcd;
	}

	.sketch {
		position: absolute;
		right: 100px;
		bottom: 0;
		width: 80px;
		height: 38px;
	}
</style>
